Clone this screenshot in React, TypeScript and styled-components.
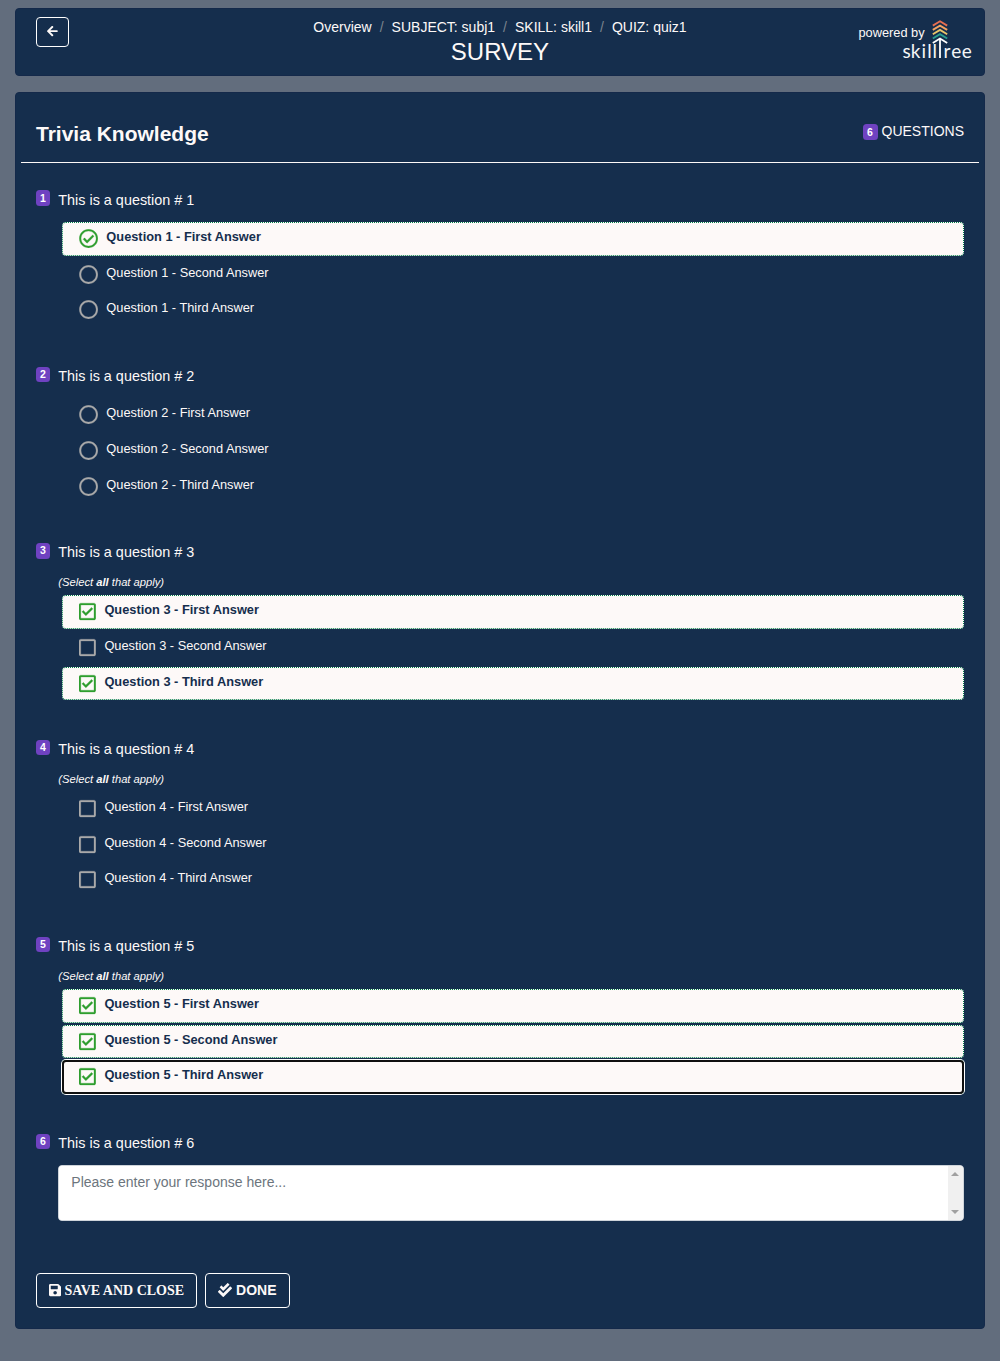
import React, { useState } from "react";
import styled, { createGlobalStyle } from "styled-components";
import {
  FaArrowLeft,
  FaCheckDouble,
  FaSave,
  FaRegCircle,
  FaRegCheckCircle,
  FaRegSquare,
  FaRegCheckSquare,
} from "react-icons/fa";

const sans = '"Liberation Sans", Arial, sans-serif';

const GlobalStyle = createGlobalStyle`
  *, *::before, *::after { box-sizing: border-box; }
  body {
    margin: 0;
    background: #626d7d;
    color: #fdf9f8;
    font: 14px/1.5 ${sans};
  }
  button, textarea { font: inherit; }
`;

const Page = styled.main`
  min-height: 1361px;
  padding: 8px 15px 32px;
  display: flex;
  flex-direction: column;
  gap: 16px;
`;

const Panel = styled.section`
  background: #152e4d;
  border: 1px solid #14294a;
  border-radius: 4px;
`;

const Header = styled(Panel)`
  height: 68px;
  padding: 8px 10px 0 20px;
  display: grid;
  grid-template-columns: 150px 1fr 160px;
  align-items: start;
`;

const Title = styled.div`
  display: flex;
  flex-direction: column;
  align-items: center;
`;

const Crumbs = styled.nav`
  display: flex;
  gap: 8px;
  line-height: 21px;
`;

const Slash = styled.span`
  color: #7b848e;
`;

const PageName = styled.h1`
  margin: 0;
  font-size: 24px;
  font-weight: 400;
  line-height: 28px;
`;

const OutlineButton = styled.button<{ $serif?: boolean }>`
  display: inline-flex;
  align-items: center;
  height: 35px;
  padding: 0 12px;
  border: 1px solid #fff;
  border-radius: 4px;
  background: transparent;
  color: #fdf9f8;
  font-family: ${(p) => (p.$serif ? '"Liberation Serif", "Times New Roman", serif' : sans)};
  font-size: 14px;
  font-weight: 700;
  gap: ${(p) => (p.$serif ? "3.3px" : "4px")};
  svg {
    width: ${(p) => (p.$serif ? "12.25px" : "14px")};
    height: 14px;
    margin-bottom: 2px;
  }
`;

const BackButton = styled(OutlineButton)`
  width: 33px;
  height: 30px;
  padding: 0;
  justify-content: center;
  svg {
    width: 10.7px;
    height: 12.25px;
  }
`;

const Brand = styled.div`
  display: flex;
  justify-content: flex-end;
  font-size: 12.8px;
  line-height: 20px;
`;

const BrandText = styled.span`
  padding-top: 6px;
  margin-right: -24.6px;
`;

const Quiz = styled(Panel)`
  height: 1237px;
  padding: 0 5px;
`;

const QuizHead = styled.header`
  display: flex;
  justify-content: space-between;
  height: 70px;
  padding: 25px 15px 0;
  border-bottom: 1px solid #fdf9f8;
`;

const QuizName = styled.h2`
  margin: 0;
  font-size: 21px;
  line-height: 32px;
`;

const Count = styled.div`
  display: flex;
  align-items: center;
  gap: 4px;
  height: 27px;
`;

const Badge = styled.span`
  display: inline-flex;
  align-items: center;
  justify-content: center;
  min-width: 14px;
  height: 15.4px;
  padding: 0 4px;
  border-radius: 3.5px;
  background: #6f42c1;
  color: #fff;
  font-size: 10.5px;
  font-weight: 700;
  line-height: 15px;
`;

const CountBadge = styled(Badge)`
  min-width: 15px;
  height: 16px;
  margin-top: 1px;
`;

const NumberBadge = styled(Badge)`
  margin-top: 0.9px;
`;

const Questions = styled.div`
  padding: 26.5px 15px 0;
`;

const QuestionBlock = styled.article<{ $height: number }>`
  display: grid;
  grid-template-columns: 14px 1fr;
  column-gap: 8.3px;
  align-items: start;
  height: ${(p) => p.$height}px;
`;

const Prompt = styled.div`
  font-size: 14.4px;
  line-height: 21px;
`;

const Hint = styled.div`
  margin-top: 11px;
  font-size: 11.2px;
  font-style: italic;
  line-height: 17px;
`;

const Answers = styled.div<{ $hint: boolean }>`
  display: flex;
  flex-direction: column;
  gap: 2px;
  padding-left: 3.7px;
  margin-top: ${(p) => (p.$hint ? 4 : 11.4)}px;
`;

const AnswerRow = styled.div<{ $on: boolean; $focus: boolean }>`
  display: flex;
  height: 33.7px;
  padding: 4px 16px 0;
  border: 1px dotted ${(p) => (p.$on ? "#007c49" : "transparent")};
  border-radius: 4px;
  background: ${(p) => (p.$on ? "#fdf9f8" : "transparent")};
  color: ${(p) => (p.$on ? "#152e4d" : "#fdf9f8")};
  font-size: 12.8px;
  font-weight: ${(p) => (p.$on ? 700 : 400)};
  line-height: 19px;
  cursor: pointer;
  outline: ${(p) => (p.$focus ? "2px solid #101010" : "none")};
  outline-offset: -2px;
  box-shadow: ${(p) => (p.$focus ? "0 0 0 1px #fff" : "none")};
`;

const Mark = styled.span<{ $on: boolean; $multi: boolean }>`
  display: flex;
  margin: 2px ${(p) => (p.$multi ? 8.6 : 8.2)}px 0 0;
  color: ${(p) => (p.$on ? "#2f9e2f" : "#aaaaaa")};
  svg {
    width: ${(p) => (p.$multi ? 16.8 : 19.2)}px;
    height: 19.2px;
    stroke-width: 7;
  }
`;

const ResponseBox = styled.div`
  display: flex;
  height: 56px;
  margin-top: 11px;
  border: 1px solid #ced4da;
  border-radius: 4px;
  overflow: hidden;
  background: #fff;
`;

const Response = styled.textarea`
  flex: 1;
  padding: 6px 12px;
  border: 0;
  outline: 0;
  resize: none;
  overflow: hidden;
  color: #495057;
  &::placeholder { color: #6c757d; opacity: 1; }
`;

const ScrollTrack = styled.div`
  display: flex;
  flex-direction: column;
  justify-content: space-between;
  align-items: center;
  width: 15px;
  padding: 6px 1px 6px 0;
  background: #f0f0f0;
`;

const ScrollArrow = styled.i<{ $down?: boolean }>`
  border: 4px solid transparent;
  border-top: ${(p) => (p.$down ? "4px solid #a0a0a0" : "0")};
  border-bottom: ${(p) => (p.$down ? "0" : "4px solid #a0a0a0")};
`;

const Actions = styled.footer`
  display: flex;
  gap: 8px;
  padding: 0 15px;
`;

type Question = { answers: number; multi?: boolean; picked: number[]; height: number };

const questions: Question[] = [
  { answers: 3, picked: [0], height: 176.3 },
  { answers: 3, picked: [], height: 176.45 },
  { answers: 3, multi: true, picked: [0, 2], height: 196.85 },
  { answers: 3, multi: true, picked: [], height: 197 },
  { answers: 3, multi: true, picked: [0, 1, 2], height: 197 },
  { answers: 0, picked: [], height: 140 },
];

const ordinals = ["First", "Second", "Third"];

const Wordmark = styled.text`
  fill: #f4f5f7;
  font-family: Lato, "Open Sans", sans-serif;
  font-size: 19px;
  font-weight: 400;
`;

function Logo() {
  const chevrons = ["#e76f51", "#f4a261", "#e9c46a", "#2a9d8f"];
  return (
    <svg width="74" height="50" viewBox="0 0 74 50" fill="none">
      {chevrons.map((color, i) => (
        <path key={color} d={`M32.8 ${8.6 + i * 4.3}L40 ${4.3 + i * 4.3}L47.2 ${8.6 + i * 4.3}`} stroke={color} strokeWidth="1.9" />
      ))}
      <path d="M32.8 26L40 21.6L47.2 26M40 21.6V41" stroke="#fff" strokeWidth="1.8" />
      <Wordmark x="2.4 10.8 21.6 27.2 32.6" y="40.8">skill</Wordmark>
      <Wordmark x="43.4 51.2 61.8" y="40.8">ree</Wordmark>
    </svg>
  );
}

function AnswerMark({ on, multi }: { on: boolean; multi: boolean }) {
  const Icon = multi ? (on ? FaRegCheckSquare : FaRegSquare) : on ? FaRegCheckCircle : FaRegCircle;
  return (
    <Mark $on={on} $multi={multi}>
      <Icon />
    </Mark>
  );
}

function QuestionItem({ q, number }: { q: Question; number: number }) {
  const [picked, setPicked] = useState(q.picked);
  const multi = !!q.multi;
  const toggle = (i: number) =>
    setPicked((p) => (multi ? (p.includes(i) ? p.filter((x) => x !== i) : [...p, i]) : [i]));
  return (
    <QuestionBlock $height={q.height}>
      <NumberBadge>{number}</NumberBadge>
      <div>
        <Prompt>This is a question # {number}</Prompt>
        {multi && (
          <Hint>
            (Select <b>all</b> that apply)
          </Hint>
        )}
        {q.answers > 0 ? (
          <Answers $hint={multi}>
            {ordinals.slice(0, q.answers).map((name, i) => (
              <AnswerRow key={name} $on={picked.includes(i)} $focus={number === 5 && i === 2} onClick={() => toggle(i)}>
                <AnswerMark on={picked.includes(i)} multi={multi} />
                Question {number} - {name} Answer
              </AnswerRow>
            ))}
          </Answers>
        ) : (
          <ResponseBox>
            <Response placeholder="Please enter your response here..." />
            <ScrollTrack>
              <ScrollArrow />
              <ScrollArrow $down />
            </ScrollTrack>
          </ResponseBox>
        )}
      </div>
    </QuestionBlock>
  );
}

export default function App() {
  const crumbs = ["Overview", "SUBJECT: subj1", "SKILL: skill1", "QUIZ: quiz1"];
  return (
    <>
      <GlobalStyle />
      <Page>
        <Header>
          <BackButton aria-label="Back">
            <FaArrowLeft />
          </BackButton>
          <Title>
            <Crumbs>
              {crumbs.map((c, i) => (
                <React.Fragment key={c}>
                  {i > 0 && <Slash>/</Slash>}
                  <span>{c}</span>
                </React.Fragment>
              ))}
            </Crumbs>
            <PageName>SURVEY</PageName>
          </Title>
          <Brand>
            <BrandText>powered by</BrandText>
            <Logo />
          </Brand>
        </Header>
        <Quiz>
          <QuizHead>
            <QuizName>Trivia Knowledge</QuizName>
            <Count>
              <CountBadge>6</CountBadge>QUESTIONS
            </Count>
          </QuizHead>
          <Questions>
            {questions.map((q, i) => (
              <QuestionItem key={i} q={q} number={i + 1} />
            ))}
          </Questions>
          <Actions>
            <OutlineButton $serif>
              <FaSave />
              SAVE AND CLOSE
            </OutlineButton>
            <OutlineButton>
              <FaCheckDouble />
              DONE
            </OutlineButton>
          </Actions>
        </Quiz>
      </Page>
    </>
  );
}
